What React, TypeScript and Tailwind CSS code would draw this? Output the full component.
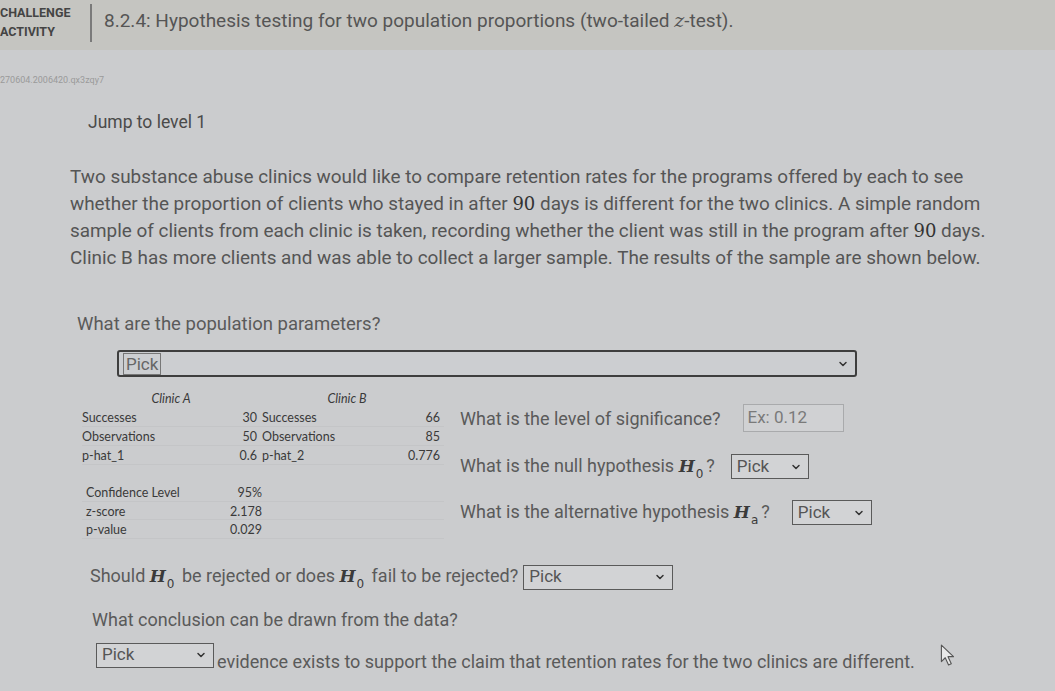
import { ChevronDown } from 'lucide-react';

const H = ({ sub }: { sub: string }) => (
    <span className="font-['DejaVu_Serif',serif] italic font-bold text-[#3a3a3a] text-[17px] mr-[3px]">
        H<sub className="not-italic font-normal text-[12px] align-[-3px] font-['DejaVu_Sans',sans-serif] ml-[1px]">{sub}</sub>
    </span>
);

const Pick = ({ w, h = 'h-[25px]' }: { w: string; h?: string }) => (
    <div className={`${w} ${h} inline-flex items-center justify-between border border-[#5a5a5a] bg-[#d2d3d5] pl-[5px] pr-[6px] text-[17px] text-[#555]`}>
        <span>Pick</span>
        <ChevronDown size={12} strokeWidth={3} className="text-[#333]" />
    </div>
);

function DataTable() {
    const top = [
        ['Successes', '30', 'Successes', '66'],
        ['Observations', '50', 'Observations', '85'],
        ['p-hat_1', '0.6', 'p-hat_2', '0.776'],
    ];
    const bottom = [
        ['Confidence Level', '95%'],
        ['z-score', '2.178'],
        ['p-value', '0.029'],
    ];
    return (
        <div className="w-[362px] font-['Lato',sans-serif] text-[12.5px] text-[#3a3a3a] leading-[19px]">
            <div className="flex h-[19px]">
                <div className="w-[176px] text-center italic pl-[2px]">Clinic A</div>
                <div className="w-[186px] text-center italic pr-[8px]">Clinic B</div>
            </div>
            {top.map((r) => (
                <div key={r[0]} className="flex h-[19px] border-b border-[#c4c5c7]">
                    <div className="w-[176px] flex justify-between pr-[1px]">
                        <span>{r[0]}</span>
                        <span>{r[1]}</span>
                    </div>
                    <div className="w-[186px] flex justify-between pl-[4px] pr-[4px]">
                        <span>{r[2]}</span>
                        <span>{r[3]}</span>
                    </div>
                </div>
            ))}
            <div className="h-[18px]" />
            {bottom.map((r) => (
                <div key={r[0]} className="flex h-[18.5px] border-b border-[#c4c5c7]">
                    <div className="w-[180px] flex justify-between pl-[4px]">
                        <span>{r[0]}</span>
                        <span>{r[1]}</span>
                    </div>
                </div>
            ))}
        </div>
    );
}

export default function App() {
    return (
        <div className="w-[1055px] h-[691px] overflow-hidden bg-[#cbccce] font-['Roboto',sans-serif] text-[#505050] relative">
            <div className="h-[50px] bg-[#c5c5c1] flex items-center">
                <div className="w-[90px] text-[12.5px] font-bold leading-[19px] text-[#444] -mt-[6px]">
                    <div>CHALLENGE</div>
                    <div>ACTIVITY</div>
                </div>
                <div className="w-[2px] h-[38px] bg-[#7a7a7a] -mt-[4px]" />
                <div className="pl-[12px] text-[19px] text-[#555] -mt-[8px] whitespace-nowrap">
                    8.2.4: Hypothesis testing for two population proportions (two-tailed{' '}
                    <span className="font-['DejaVu_Serif',serif] italic">z</span>-test).
                </div>
            </div>

            <div className="mt-[25px] text-[9px] leading-[10px] text-[#9a9a9a]">270604.2006420.qx3zqy7</div>

            <div className="mt-[27px] pl-[88px] text-[17.5px] leading-[20px] text-[#4a4a4a]">Jump to level 1</div>

            <p className="mt-[31px] pl-[70px] text-[18.9px] leading-[27px] text-[#555] whitespace-nowrap">
                Two substance abuse clinics would like to compare retention rates for the programs offered by each to see<br />
                whether the proportion of clients who stayed in after <span className="font-['DejaVu_Serif',serif] text-[#333] text-[18px]">90</span> days is different for the two clinics. A simple random<br />
                sample of clients from each clinic is taken, recording whether the client was still in the program after <span className="font-['DejaVu_Serif',serif] text-[#333] text-[18px]">90</span> days.<br />
                Clinic B has more clients and was able to collect a larger sample. The results of the sample are shown below.
            </p>

            <div className="mt-[43px] pl-[77px] text-[18.5px] leading-[20px] text-[#5a5a5a]">What are the population parameters?</div>

            <div className="mt-[16px] ml-[117px] w-[740px] h-[27px] flex items-center justify-between border-2 border-[#3e3e3e] rounded-[3px] bg-[#ccced1] pl-[4px] pr-[6px] text-[17px] text-[#666]">
                <span className="border border-[#777] px-[2px] leading-[20px]">Pick</span>
                <ChevronDown size={12} strokeWidth={3} className="text-[#333]" />
            </div>

            <div className="mt-[12px] flex">
                <div className="ml-[82px]">
                    <DataTable />
                </div>
                <div className="ml-[16px] pt-[15px] flex flex-col gap-[21px] text-[18px] text-[#5a5a5a]">
                    <div className="flex items-center h-[28px]">
                        <span>What is the level of significance?</span>
                        <div className="ml-[23px] w-[101px] h-[28px] border border-[#a9aaac] bg-[#d0d1d3] flex items-center pl-[3px] text-[#7a7a7a] text-[17px]">Ex: 0.12</div>
                    </div>
                    <div className="flex items-center h-[25px]">
                        <span>What is the null hypothesis <H sub="0" />?</span>
                        <div className="ml-[16px]"><Pick w="w-[78px]" /></div>
                    </div>
                    <div className="flex items-center h-[25px]">
                        <span>What is the alternative hypothesis <H sub="a" />?</span>
                        <div className="ml-[22px]"><Pick w="w-[80px]" /></div>
                    </div>
                </div>
            </div>

            <div className="mt-[25px] pl-[90px] flex items-center text-[18px] text-[#5a5a5a] h-[25px]">
                <span>Should <H sub="0" /> be rejected or does <H sub="0" /> fail to be rejected?</span>
                <div className="ml-[5px]"><Pick w="w-[150px]" /></div>
            </div>

            <div className="mt-[21px] pl-[92px] text-[18px] leading-[20px] text-[#5a5a5a]">What conclusion can be drawn from the data?</div>

            <div className="mt-[13px] pl-[96px] flex items-end text-[18px] text-[#5a5a5a]">
                <Pick w="w-[118px]" />
                <span className="ml-[3px] leading-[20px] -mb-[4px]">evidence exists to support the claim that retention rates for the two clinics are different.</span>
            </div>

            <svg className="absolute left-[940px] top-[644px]" width="16" height="22" viewBox="0 0 14 20">
                <path d="M1 1 L1 16 L4.5 12.5 L7.5 19 L10 18 L7 11.5 L12 11.5 Z" fill="#e8e8e8" stroke="#555" strokeWidth="1" strokeLinejoin="round" />
            </svg>
        </div>
    );
}
